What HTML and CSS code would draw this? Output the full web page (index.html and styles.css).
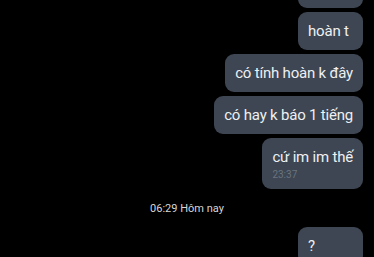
FILE: index.html
```html
<!DOCTYPE html>
<html lang="vi">
<head>
    <meta charset="UTF-8">
    <meta name="viewport" content="width=device-width, initial-scale=1.0">
    <title>Tin nhắn</title>
    <link rel="stylesheet" href="styles.css">
</head>
<body>
    <div class="chat">
        <div class="msg first">
            <div class="bubble"></div>
        </div>
        <div class="msg">
            <div class="bubble">hoàn t</div>
        </div>
        <div class="msg">
            <div class="bubble">có tính hoàn k đây</div>
        </div>
        <div class="msg">
            <div class="bubble">có hay k báo 1 tiếng</div>
        </div>
        <div class="msg">
            <div class="bubble">
                <div>cứ im im thế</div>
                <div class="time">23:37</div>
            </div>
        </div>
        <div class="day">06:29 Hôm nay</div>
        <div class="msg">
            <div class="bubble">?</div>
        </div>
    </div>
</body>
</html>
```

FILE: styles.css
```css
body {
    margin: 0;
    background: #000;
    font-family: Roboto, "Noto Sans", sans-serif;
    overflow: hidden;
}
.chat {
    display: flex;
    flex-direction: column;
    padding: 0 11px;
}
.msg {
    display: flex;
    justify-content: flex-end;
    margin-bottom: 4px;
}
.msg.first {
    margin-top: -30px;
}
.msg.first .bubble {
    height: 38px;
}
.bubble {
    box-sizing: border-box;
    min-width: 65px;
    padding: 9px 10px;
    background: #3d4652;
    border-radius: 9px;
    color: #eef0f3;
    font-size: 15px;
    line-height: 20px;
    letter-spacing: -0.2px;
}
.time {
    margin-top: 2px;
    font-size: 10px;
    line-height: 11px;
    letter-spacing: 0;
    color: #6a7480;
}
.day {
    margin: 9px 0 11px;
    text-align: center;
    font-size: 11px;
    line-height: 14px;
    color: #d4d6d9;
}
```
